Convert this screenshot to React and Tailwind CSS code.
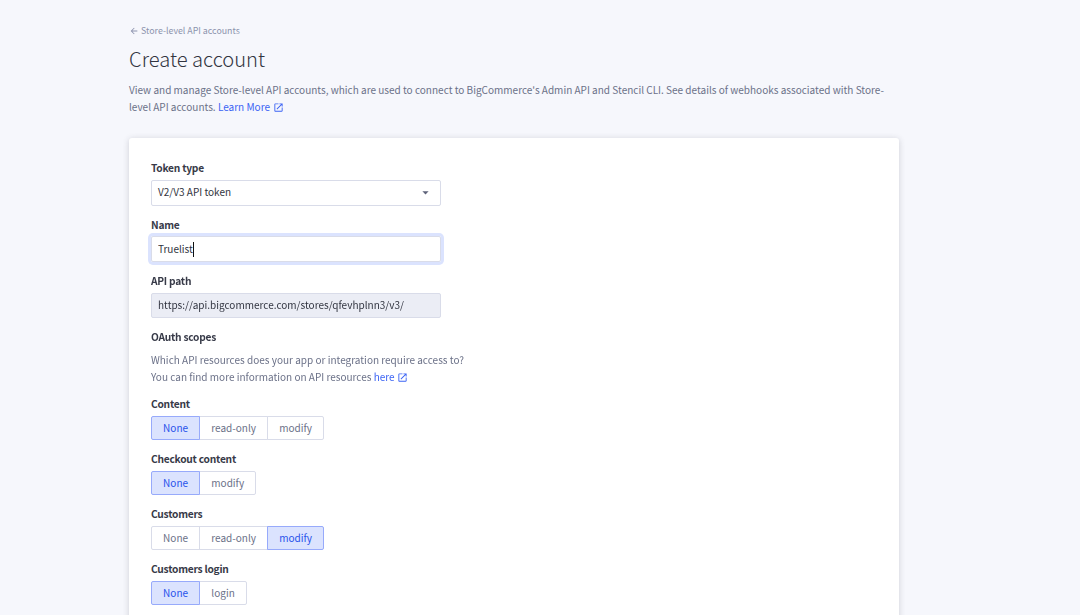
import { useState } from "react";
import { MdArrowBack, MdArrowDropDown, MdOpenInNew } from "react-icons/md";

const SCOPES = [
  { label: "Content", options: ["None", "read-only", "modify"], value: "None" },
  { label: "Checkout content", options: ["None", "modify"], value: "None" },
  { label: "Customers", options: ["None", "read-only", "modify"], value: "modify" },
  { label: "Customers login", options: ["None", "login"], value: "None" },
];

const Label = ({ children }) => (
  <div className="h-[17px] leading-[17px] text-[10.2px] tracking-[-0.23px] font-bold text-[#373a48]">
    {children}
  </div>
);

const ExternalLink = ({ children }) => (
  <a href="#" className="text-[#3c64f4]">
    {children}
    <MdOpenInNew className="inline ml-[2.5px] -mt-[2px] size-[11px]" />
  </a>
);

const Scope = ({ label, options, value }) => {
  const [selected, setSelected] = useState(value);

  return (
    <div className="mb-[10px]">
      <Label>{label}</Label>
      <div className="flex mt-1">
        {options.map((option) => (
          <button
            key={option}
            onClick={() => setSelected(option)}
            className={`h-6 px-[11.12px] -mr-px border leading-[22px] first:rounded-l-[2px] last:rounded-r-[2px] cursor-pointer ${
              option === selected
                ? "relative bg-[#dbe3fe] border-[#97aafb] text-[#2852eb]"
                : "bg-white border-[#d9dce9] text-[#6b7188]"
            }`}
          >
            {option}
          </button>
        ))}
      </div>
    </div>
  );
};

const App = () => {
  const [name, setName] = useState("Truelist");

  return (
    <div className="h-[615px] overflow-hidden bg-[#f6f7fc] font-['Noto_Sans_CJK_SC',sans-serif] text-[10.03px] text-[#313440]">
      <div className="ml-[129px] w-[770px] pt-[22px]">
        {/* Page header */}
        <a href="#" className="flex items-center h-[17px] text-[8.83px] leading-[17px] text-[#8c93ad]">
          <MdArrowBack className="size-[10px] mr-[2px]" />
          Store-level API accounts
        </a>
        <h1 className="mt-1 h-8 text-[20.15px] leading-8 font-light">Create account</h1>
        <p className="mt-[6px] leading-[17px] text-[#6b7188]">
          View and manage Store-level API accounts, which are used to connect to BigCommerce's Admin API and Stencil CLI. See details of webhooks associated with Store-
          <br />
          level API accounts. <ExternalLink>Learn More</ExternalLink>
        </p>

        {/* Form */}
        <div className="mt-[23px] h-[520px] px-[22px] pt-[21px] bg-white rounded-[3px] shadow-[0_1px_6px_rgba(49,52,64,0.2)]">
          <Label>Token type</Label>
          <div className="mt-1 w-[290px] h-[26px] flex items-center justify-between pl-[6px] pr-[7px] border border-[#d9dce9] rounded-[2px]">
            <span className="pb-[2px]">V2/V3 API token</span>
            <MdArrowDropDown className="size-[15px] -mt-px text-[#5e637a]" />
          </div>

          <div className="mt-[10px]">
            <Label>Name</Label>
          </div>
          <div className="mt-[3px] w-[290px] h-[26px] flex items-center pl-[6px] border border-[#d9dce9] rounded-[2px] ring-[3px] ring-[#dbe3fe]">
            <input
              autoFocus
              value={name}
              onChange={(e) => setName(e.target.value)}
              className="field-sizing-content outline-none caret-transparent"
            />
            <span className="w-px h-[15px] bg-[#111]" />
          </div>

          <div className="mt-[10px]">
            <Label>API path</Label>
          </div>
          <div className="mt-1 w-[290px] h-[25px] flex items-center pl-[6px] pb-[2px] border border-[#d9dce9] rounded-[2px] bg-[#ebedf5]">
            https://api.bigcommerce.com/stores/qfevhplnn3/v3/
          </div>

          <div className="mt-[10px]">
            <Label>OAuth scopes</Label>
          </div>
          <p className="mt-[6px] mb-[10px] leading-[17px] text-[#6b7188]">
            Which API resources does your app or integration require access to?
            <br />
            You can find more information on API resources <ExternalLink>here</ExternalLink>
          </p>

          {SCOPES.map((scope) => (
            <Scope key={scope.label} {...scope} />
          ))}
        </div>
      </div>
    </div>
  );
};

export default App;
